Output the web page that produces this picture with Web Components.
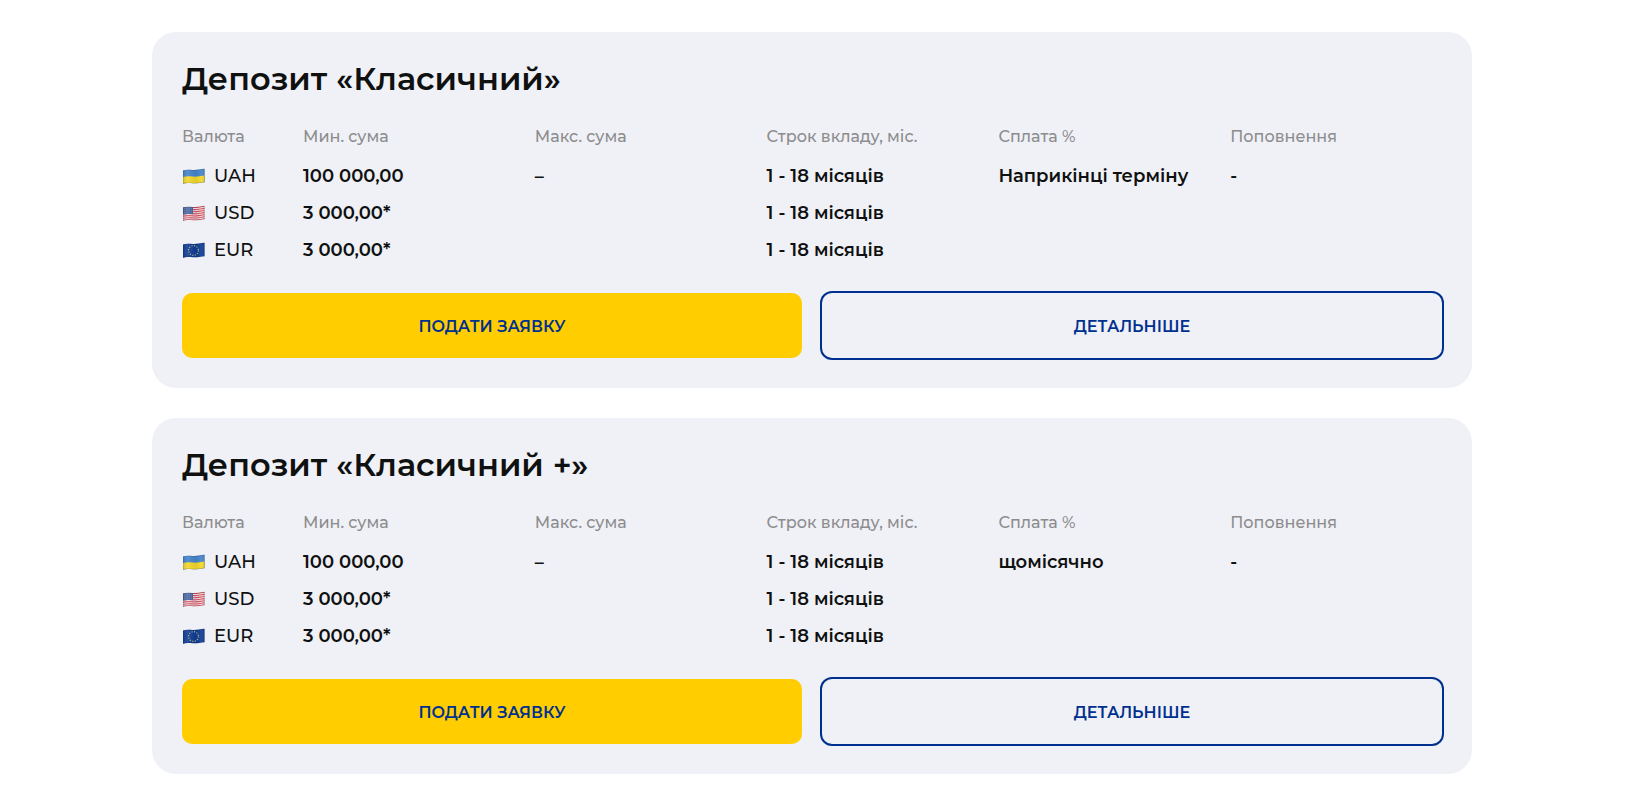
<!DOCTYPE html>
<html lang="uk">
<head>
<meta charset="utf-8">
<meta name="viewport" content="width=device-width, initial-scale=1">
<title>Депозити</title>
<style>
    body {
        margin: 0;
        background: #fff;
        color: #0f1010;
        font-family: Montserrat, Inter, "Noto Sans", sans-serif;
        font-size: 18px;
    }
</style>
</head>
<body>

<deposit-list>
    <deposit-card name="Депозит «Класичний»" payout="Наприкінці терміну"></deposit-card>
    <deposit-card name="Депозит «Класичний +»" payout="щомісячно"></deposit-card>
</deposit-list>

<script>
// Shared by every flag: a cloth outline with one wave in it
const WAVE = 'M1 2.5C4 1.2 7 1.7 11 2C15 2.2 18 1.2 22.5 .8V14.2C18 14.6 15 15.6 11 15.3C7 15 4 14.5 1 15.8Z';

const FLAGS = {
    UAH: `
        <rect width="23" height="17" fill="#4484cb"/>
        <path d="M0 9.4C4 7.9 7 8.2 11 8.6C15 8.9 18 7.9 23 7.5V17H0Z" fill="#f3d72b"/>`,
    USD: `
        <rect width="23" height="17" fill="#f1e6ea"/>
        <g fill="none" stroke="#d84b5b" stroke-width="1.1">
            <path d="M0 3C4 1.8 7 2.2 11 2.5S18 1.8 23 1.3"/>
            <path d="M0 5.1C4 3.9 7 4.3 11 4.6S18 3.9 23 3.4"/>
            <path d="M0 7.2C4 6 7 6.4 11 6.7S18 6 23 5.5"/>
            <path d="M0 9.3C4 8.1 7 8.5 11 8.8S18 8.1 23 7.6"/>
            <path d="M0 11.4C4 10.2 7 10.6 11 10.9S18 10.2 23 9.7"/>
            <path d="M0 13.5C4 12.3 7 12.7 11 13S18 12.3 23 11.8"/>
            <path d="M0 15.6C4 14.4 7 14.8 11 15.1S18 14.4 23 13.9"/>
        </g>
        <path d="M0 2C4 1.2 7 1.7 11 2V9.2C7 8.9 4 8.6 0 9.8Z" fill="#45639f"/>
        <g fill="none" stroke="#a9b9d8" stroke-width=".6" stroke-dasharray=".6 1.2">
            <path d="M2 4.1Q6 2.9 10 3.6M2 6Q6 4.8 10 5.5M2 7.9Q6 6.7 10 7.4"/>
        </g>`,
    EUR: `
        <rect width="23" height="17" fill="#103c94"/>
        <circle cx="11.5" cy="8.5" r="4.9" fill="none" stroke="#c3c489" stroke-width="1.1" stroke-dasharray="1.1 1.46"/>`
};

class CurrencyFlag extends HTMLElement {
    constructor() {
        super();
        this.attachShadow({ mode: 'open' });
    }

    connectedCallback() {
        this.shadowRoot.innerHTML = `
            <style>
                :host { display: block; flex: none; }
                svg { display: block; }
            </style>
            <svg width="23" height="17" viewBox="0 0 23 17" aria-hidden="true">
                <defs>
                    <clipPath id="cloth"><path d="${WAVE}"/></clipPath>
                    <linearGradient id="fold">
                        <stop offset="0" stop-color="#000" stop-opacity=".16"/>
                        <stop offset=".25" stop-color="#fff" stop-opacity=".1"/>
                        <stop offset=".6" stop-color="#000" stop-opacity=".06"/>
                        <stop offset=".85" stop-color="#fff" stop-opacity=".08"/>
                        <stop offset="1" stop-color="#000" stop-opacity=".14"/>
                    </linearGradient>
                </defs>
                <g clip-path="url(#cloth)">
                    ${FLAGS[this.getAttribute('code')]}
                    <rect width="23" height="17" fill="url(#fold)"/>
                    <path d="${WAVE}" fill="none" stroke="#000" stroke-opacity=".2"/>
                </g>
            </svg>
        `;
    }
}

customElements.define('currency-flag', CurrencyFlag);

const actionTemplate = document.createElement('template');
actionTemplate.innerHTML = `
    <style>
        :host {
            display: block;
        }

        .action {
            display: block;
            box-sizing: border-box;
            width: 100%;
            margin: 0;
            padding: 21px 20px 19px;
            border: 0;
            border-radius: 10px;
            background: #ffcd00;
            color: #00308f;
            font: inherit;
            font-size: 16px;
            font-weight: 600;
            line-height: 25px;
            text-align: center;
            text-decoration: none;
            text-transform: uppercase;
            cursor: pointer;
        }

        /* The outline is drawn outside the box */
        :host([outlined]) .action {
            background: none;
            box-shadow: 0 0 0 2px #00308f;
        }
    </style>
`;

class ActionButton extends HTMLElement {
    constructor() {
        super();
        this.attachShadow({ mode: 'open' });
        this.shadowRoot.appendChild(actionTemplate.content.cloneNode(true));
    }

    connectedCallback() {
        const href = this.getAttribute('href');
        const action = document.createElement(href ? 'a' : 'button');
        action.className = 'action';
        if (href) {
            action.href = href;
        } else {
            action.type = 'button';
        }
        action.appendChild(document.createElement('slot'));
        this.shadowRoot.appendChild(action);
    }
}

customElements.define('action-button', ActionButton);

const cardTemplate = document.createElement('template');
cardTemplate.innerHTML = `
    <style>
        :host {
            display: block;
            padding: 30px;
            border-radius: 24px;
            background: #f0f1f6;
        }

        h2 {
            margin: 0 0 29px;
            font-size: 32px;
            font-weight: 600;
            line-height: 34px;
        }

        table, thead, tbody {
            display: block;
        }

        tr {
            display: grid;
            grid-template-columns: 101px repeat(5, 1fr);
            column-gap: 20px;
        }

        th, td {
            padding: 0;
            text-align: left;
            white-space: nowrap;
        }

        thead {
            margin-bottom: 9px;
        }

        thead th {
            color: #8c8c8e;
            font-size: 16px;
            font-weight: 500;
            line-height: 24px;
        }

        tbody th, td {
            font-weight: 600;
            line-height: 37px;
        }

        tbody th {
            display: flex;
            align-items: center;
            gap: 9px;
            font-weight: 500;
        }

        .actions {
            display: grid;
            grid-template-columns: 1fr 1fr;
            gap: 20px;
            margin-top: 24px;
        }
    </style>
    <h2></h2>
    <table>
        <thead>
            <tr>
                <th scope="col">Валюта</th>
                <th scope="col">Мин. сума</th>
                <th scope="col">Макс. сума</th>
                <th scope="col">Строк вкладу, міс.</th>
                <th scope="col">Сплата %</th>
                <th scope="col">Поповнення</th>
            </tr>
        </thead>
        <tbody>
            <tr>
                <th scope="row"><currency-flag code="UAH"></currency-flag>UAH</th>
                <td>100 000,00</td>
                <td>–</td>
                <td>1 - 18 місяців</td>
                <td class="payout"></td>
                <td>-</td>
            </tr>
            <tr>
                <th scope="row"><currency-flag code="USD"></currency-flag>USD</th>
                <td>3 000,00*</td>
                <td></td>
                <td>1 - 18 місяців</td>
                <td></td>
                <td></td>
            </tr>
            <tr>
                <th scope="row"><currency-flag code="EUR"></currency-flag>EUR</th>
                <td>3 000,00*</td>
                <td></td>
                <td>1 - 18 місяців</td>
                <td></td>
                <td></td>
            </tr>
        </tbody>
    </table>
    <div class="actions">
        <action-button>Подати заявку</action-button>
        <action-button outlined href="#details">Детальніше</action-button>
    </div>
`;

class DepositCard extends HTMLElement {
    constructor() {
        super();
        this.attachShadow({ mode: 'open' });
        this.shadowRoot.appendChild(cardTemplate.content.cloneNode(true));
    }

    connectedCallback() {
        this.shadowRoot.querySelector('h2').textContent = this.getAttribute('name');
        this.shadowRoot.querySelector('.payout').textContent = this.getAttribute('payout');
    }
}

customElements.define('deposit-card', DepositCard);

const listTemplate = document.createElement('template');
listTemplate.innerHTML = `
    <style>
        :host {
            display: grid;
            gap: 30px;
            box-sizing: border-box;
            max-width: 1362px;
            margin: 0 auto;
            padding: 32px 22px 0 20px;
        }
    </style>
    <slot></slot>
`;

class DepositList extends HTMLElement {
    constructor() {
        super();
        this.attachShadow({ mode: 'open' });
        this.shadowRoot.appendChild(listTemplate.content.cloneNode(true));
    }
}

customElements.define('deposit-list', DepositList);
</script>
</body>
</html>
